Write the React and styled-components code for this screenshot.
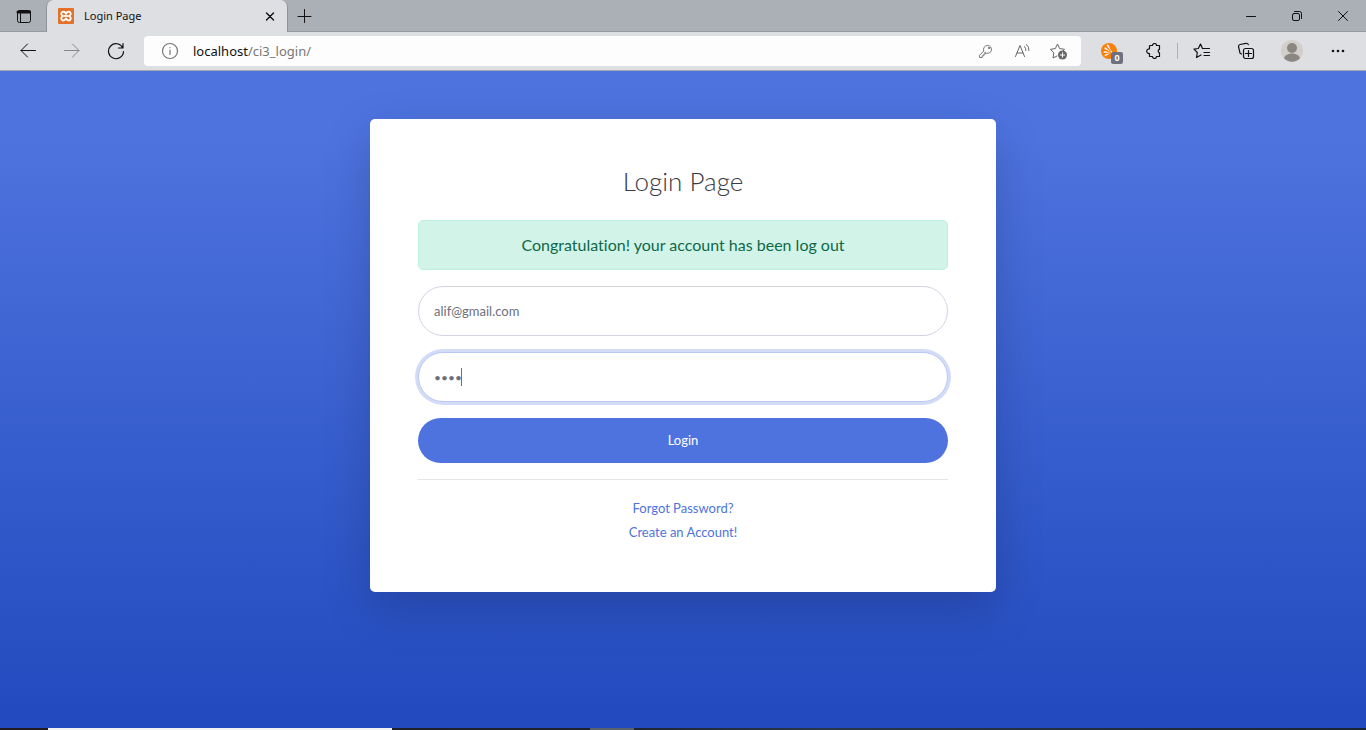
import React from "react";
import styled, { createGlobalStyle } from "styled-components";

const Global = createGlobalStyle`
  *, *::before, *::after { box-sizing: border-box; }
  body { margin: 0; }
  button, input { font: inherit; }
`;

const Window = styled.div`
  display: flex;
  flex-direction: column;
  min-height: 100vh;
  font-family: "Noto Sans", "Open Sans", sans-serif;
`;

const TabStrip = styled.header`
  display: flex;
  height: 32px;
  background: #abafb6;
  border-bottom: 1px solid #96999f;
`;

const IconButton = styled.button`
  display: flex;
  flex: none;
  align-items: center;
  justify-content: center;
  width: ${(p) => p.$width || 44}px;
  height: ${(p) => p.$height || 32}px;
  padding: 0;
  border: 0;
  background: none;
  color: ${(p) => p.$color || "#111"};
`;

const Tab = styled.div`
  display: flex;
  align-items: center;
  gap: 10px;
  width: 242px;
  height: 32px;
  padding: 0 9px 0 11px;
  border-left: 1px solid #8f9298;
  border-right: 1px solid #8f9298;
  border-radius: 7px 7px 0 0;
  background: #dedfe3;
`;

const TabTitle = styled.span`
  flex: 1;
  font-size: 11px;
  line-height: 16px;
  color: #111;
`;

const WindowButtons = styled.div`
  display: flex;
  margin-left: auto;
`;

const Toolbar = styled.nav`
  display: flex;
  align-items: center;
  height: 39px;
  padding: 0 6px;
  background: #dedfe3;
  border-bottom: 1px solid #a4a7ae;
`;

const AddressBar = styled.div`
  display: flex;
  flex: 1;
  align-items: center;
  height: 30px;
  margin: 0 7px 0 6px;
  padding: 0 5px 0 17px;
  border-radius: 4px;
  background: #fdfdfd;
`;

const Address = styled.span`
  flex: 1;
  margin-left: 14px;
  font-size: 13px;
  line-height: 20px;
  color: #777;
`;

const Host = styled.span`
  color: #111;
`;

const Divider = styled.span`
  width: 1px;
  height: 16px;
  margin: 0 2px 0 1px;
  background: #aeb0b5;
`;

const BadgeAnchor = styled.span`
  position: relative;
  display: flex;
`;

const Badge = styled.span`
  position: absolute;
  left: 10px;
  top: 10px;
  width: 12px;
  height: 12px;
  border-radius: 2px;
  background: #6f7180;
  color: #fff;
  font-size: 9px;
  font-weight: 700;
  line-height: 12px;
  text-align: center;
`;

const Page = styled.main`
  flex: 1;
  padding: 48px 12px;
  background: linear-gradient(180deg, #4e73df 10%, #224abe 100%);
  font-family: Lato, "Open Sans", sans-serif;
  font-variant-ligatures: none;
`;

const Card = styled.section`
  max-width: 626px;
  margin: 0 auto;
  padding: 48px;
  border-radius: 5px;
  background: #fff;
  box-shadow: 0 16px 48px rgba(0, 0, 0, 0.175);
`;

const Title = styled.h1`
  margin: 0 0 24px;
  font-size: 26px;
  font-weight: 300;
  line-height: 29px;
  text-align: center;
  color: #3a3b45;
`;

const Alert = styled.div`
  margin-bottom: 16px;
  padding: 12px 20px;
  border: 1px solid #bff0de;
  border-radius: 5px;
  background: #d2f4e8;
  color: #0f6848;
  font-size: 16px;
  line-height: 24px;
  text-align: center;
`;

const Field = styled.div`
  position: relative;
  display: flex;
  margin-bottom: 16px;
`;

const TextInput = styled.input`
  width: 100%;
  height: 50px;
  padding: 0 15px;
  border: 1px solid ${(p) => (p.$active ? "#bac8f3" : "#d1d3e2")};
  border-radius: 25px;
  outline: 0;
  background: #fff;
  box-shadow: ${(p) => (p.$active ? "0 0 0 3px #d3dcf7" : "none")};
  color: #6e707e;
  caret-color: transparent;
  font-size: ${(p) => (p.$active ? 12 : 13)}px;
`;

const Caret = styled.span`
  position: absolute;
  left: 43px;
  top: 16px;
  width: 1px;
  height: 18px;
  background: #6e707e;
`;

const Submit = styled.button`
  display: block;
  width: 100%;
  height: 45px;
  padding: 0 0 2px;
  border: 0;
  border-radius: 23px;
  background: #4e73df;
  color: #fff;
  font-size: 13px;
`;

const Rule = styled.hr`
  margin: 16px 0;
  border: 0;
  border-top: 1px solid #e5e5e5;
`;

const LinkRow = styled.div`
  font-size: 13px;
  line-height: 24px;
  text-align: center;
`;

const Link = styled.a`
  color: #4e73df;
  text-decoration: none;
`;

const Taskbar = styled.footer`
  display: flex;
  height: 2px;
  padding-left: 48px;
  background: linear-gradient(90deg, #211a1e, #1d2430 45%, #28374a 60%, #1a2533);
`;

const TaskItem = styled.span`
  width: ${(p) => p.$width}px;
  margin-right: ${(p) => p.$after || 0}px;
  background: ${(p) => p.$color};
`;

const Icon = ({ size = 16, stroke = 1, children }) => (
  <svg width={size} height={size} viewBox={`0 0 ${size} ${size}`} fill="none" stroke="currentColor"
    strokeWidth={stroke} strokeLinecap="round" strokeLinejoin="round" aria-hidden="true">
    {children}
  </svg>
);

export default function App() {
  return (
    <Window>
      <Global />
      <TabStrip>
        <IconButton $width={46} aria-label="Tab actions">
          <Icon>
            <rect x="2.5" y="2.5" width="13" height="12" rx="2" />
            <path d="M3 4h12" strokeWidth="3" />
            <path d="M5.500 5v9" />
          </Icon>
        </IconButton>
        <Tab>
          <svg width="16" height="16" viewBox="0 0 16 16" aria-hidden="true">
            <rect width="16" height="16" rx="1" fill="#e5702a" />
            <path d="M8 6.2C7.600 4.600 6.700 3.600 5.300 3.600a2.100 2.100 0 0 0-1.300 3.700l1 .7-1 .8a2.100 2.100 0 0 0 1.300 3.700c1.400 0 2.300-1 2.700-2.600.4 1.600 1.300 2.600 2.700 2.600a2.100 2.100 0 0 0 1.300-3.700L11 8l1-.7a2.100 2.100 0 0 0-1.300-3.700C9.300 3.600 8.400 4.600 8 6.200Z" fill="none" stroke="#fff" strokeWidth="1.800" />
            <path d="M6 8h4" stroke="#fff" strokeWidth="1.800" />
          </svg>
          <TabTitle>Login Page</TabTitle>
          <IconButton $width={16} $height={16} aria-label="Close tab">
            <Icon stroke={1.4}><path d="M4.500 5l7 7M11.500 5l-7 7" /></Icon>
          </IconButton>
        </Tab>
        <IconButton $width={34} aria-label="New tab">
          <Icon><path d="M7.500 1.500v13M1 8.500h13" /></Icon>
        </IconButton>
        <WindowButtons>
          <IconButton $width={46} aria-label="Minimize">
            <Icon><path d="M3.500 8.500h9" /></Icon>
          </IconButton>
          <IconButton $width={46} aria-label="Restore">
            <Icon>
              <rect x="3.500" y="5.500" width="7" height="7" rx="1.500" />
              <path d="M5.500 3.500h5a2 2 0 0 1 2 2v5" />
            </Icon>
          </IconButton>
          <IconButton $width={46} aria-label="Close window">
            <Icon><path d="M3.500 3.500l9 9M12.500 3.500l-9 9" /></Icon>
          </IconButton>
        </WindowButtons>
      </TabStrip>

      <Toolbar>
        <IconButton aria-label="Back">
          <Icon><path d="M15.500 7.500H1M7.500 1L1 7.500l6.500 6.500" /></Icon>
        </IconButton>
        <IconButton $color="#85878c" aria-label="Forward">
          <Icon><path d="M.5 7.500H15M8.500 1L15 7.500 8.500 14" /></Icon>
        </IconButton>
        <IconButton aria-label="Refresh">
          <Icon size={18} stroke={1.200}>
            <path d="M15.800 6A7.500 7.500 0 1 0 16.500 9.500M16 1.500V6h-4.500" />
          </Icon>
        </IconButton>
        <AddressBar>
          <IconButton $width={18} $height={18} $color="#777" aria-label="Site information">
            <Icon size={18} stroke={1.200}>
              <circle cx="9" cy="9" r="7.500" />
              <path d="M9 8v4.500M9 5.500v.2" />
            </Icon>
          </IconButton>
          <Address><Host>localhost</Host>/ci3_login/</Address>
          <IconButton $width={36} $height={30} $color="#777" aria-label="Saved password">
            <Icon>
              <path d="M7 9.600A4 4 0 1 0 5.800 8L1.500 12.300v2.200h2.700v-1.700h1.600v-1.700h1.200Z" />
              <circle cx="11" cy="5" r=".7" />
            </Icon>
          </IconButton>
          <IconButton $width={36} $height={30} $color="#666" aria-label="Read aloud">
            <Icon>
              <path d="M1.500 13.500L6 2.500 10.500 13.500M3 10h6M10.500 3.500a5 5 0 0 1 1.400 4M12.500 1.500a7 7 0 0 1 2.500 6" />
            </Icon>
          </IconButton>
          <IconButton $width={36} $height={30} $color="#666" aria-label="Add to favorites">
            <Icon size={18}>
              <path d="M8 14L4 16l.8-5L1.500 7.300l4.800-.7L8.500 2l2.200 4.600 4.800.7-1.300 1.500" />
              <circle cx="13.500" cy="13" r="4.500" fill="#666" stroke="none" />
              <path d="M13.500 10.800v4.400M11.300 13h4.400" stroke="#fff" />
            </Icon>
          </IconButton>
        </AddressBar>
        <IconButton aria-label="Avast Online Security">
          <BadgeAnchor>
            <Icon size={18}>
              <circle cx="8" cy="9" r="8" fill="#f77f0a" stroke="none" />
              <path d="M5.500 3.200c.2-1 1.800-1 2.200 0l2.600 6.500ZM3.300 6.600c0-1 1.200-1.300 2-.7l4.500 4.300ZM2.600 10.800c-.3-1 .6-1.800 1.600-1.500l5.300 1.400ZM4 14.300c-.8-.8-.2-1.900.8-2l4.700-1Z" fill="#fff" stroke="none" />
              <path d="M10.300 9.500l2.700 5" stroke="#fff" strokeWidth="1.500" />
            </Icon>
            <Badge>0</Badge>
          </BadgeAnchor>
        </IconButton>
        <IconButton aria-label="Extensions">
          <Icon stroke={1.200}>
            <path d="M4 2.500h2.500a2 2 0 0 1 4 0h3v3.800a1.800 1.800 0 0 0 0 3.500v3.700h-3a2 2 0 0 1-4 0H3.500v-3a2.300 2.300 0 1 1 0-4.500V3Z" />
          </Icon>
        </IconButton>
        <Divider />
        <IconButton aria-label="Favorites">
          <Icon size={18} stroke={1.200}>
            <path d="M9.500 6.600L7.500 2 5.300 6.500 1 7.200 4.300 10.500 3.500 15.500 8 13M9.500 6.500h7M11 10.500h5.500M11 13.500h5.500" />
          </Icon>
        </IconButton>
        <IconButton aria-label="Collections">
          <Icon size={18} stroke={1.200}>
            <path d="M4.500 12L3 11.200 1.500 4.500A2 2 0 0 1 3 2.500l6-1.200a2 2 0 0 1 2.300 1.400" />
            <rect x="6.500" y="6.500" width="10" height="10" rx="2" />
            <path d="M11.500 8.500v6M8.500 11.500h6" />
          </Icon>
        </IconButton>
        <IconButton $width={48} aria-label="Profile">
          <svg width="22" height="22" viewBox="0 0 22 22" aria-hidden="true">
            <circle cx="11" cy="11" r="11" fill="#d2cfcb" />
            <circle cx="11" cy="8" r="5" fill="#8b8682" />
            <path d="M3 18c2-6 14-6 16 0-4 5-12 5-16 0Z" fill="#8b8682" />
          </svg>
        </IconButton>
        <IconButton aria-label="Settings and more">
          <Icon>
            <g fill="currentColor" stroke="none">
              <circle cx="3" cy="8" r="1.300" />
              <circle cx="8" cy="8" r="1.300" />
              <circle cx="13" cy="8" r="1.300" />
            </g>
          </Icon>
        </IconButton>
      </Toolbar>

      <Page>
        <Card>
          <Title>Login Page</Title>
          <Alert role="alert">Congratulation! your account has been log out</Alert>
          <form onSubmit={(e) => e.preventDefault()}>
            <Field>
              <TextInput type="text" aria-label="Email address" defaultValue="alif@gmail.com" />
            </Field>
            <Field>
              <TextInput $active type="password" aria-label="Password" defaultValue="1234" />
              <Caret />
            </Field>
            <Submit type="submit">Login</Submit>
          </form>
          <Rule />
          <LinkRow><Link href="#forgot">Forgot Password?</Link></LinkRow>
          <LinkRow><Link href="#register">Create an Account!</Link></LinkRow>
        </Card>
      </Page>

      <Taskbar>
        <TaskItem $width={344} $after={198} $color="#f3f3f3" />
        <TaskItem $width={44} $color="#59616b" />
      </Taskbar>
    </Window>
  );
}
